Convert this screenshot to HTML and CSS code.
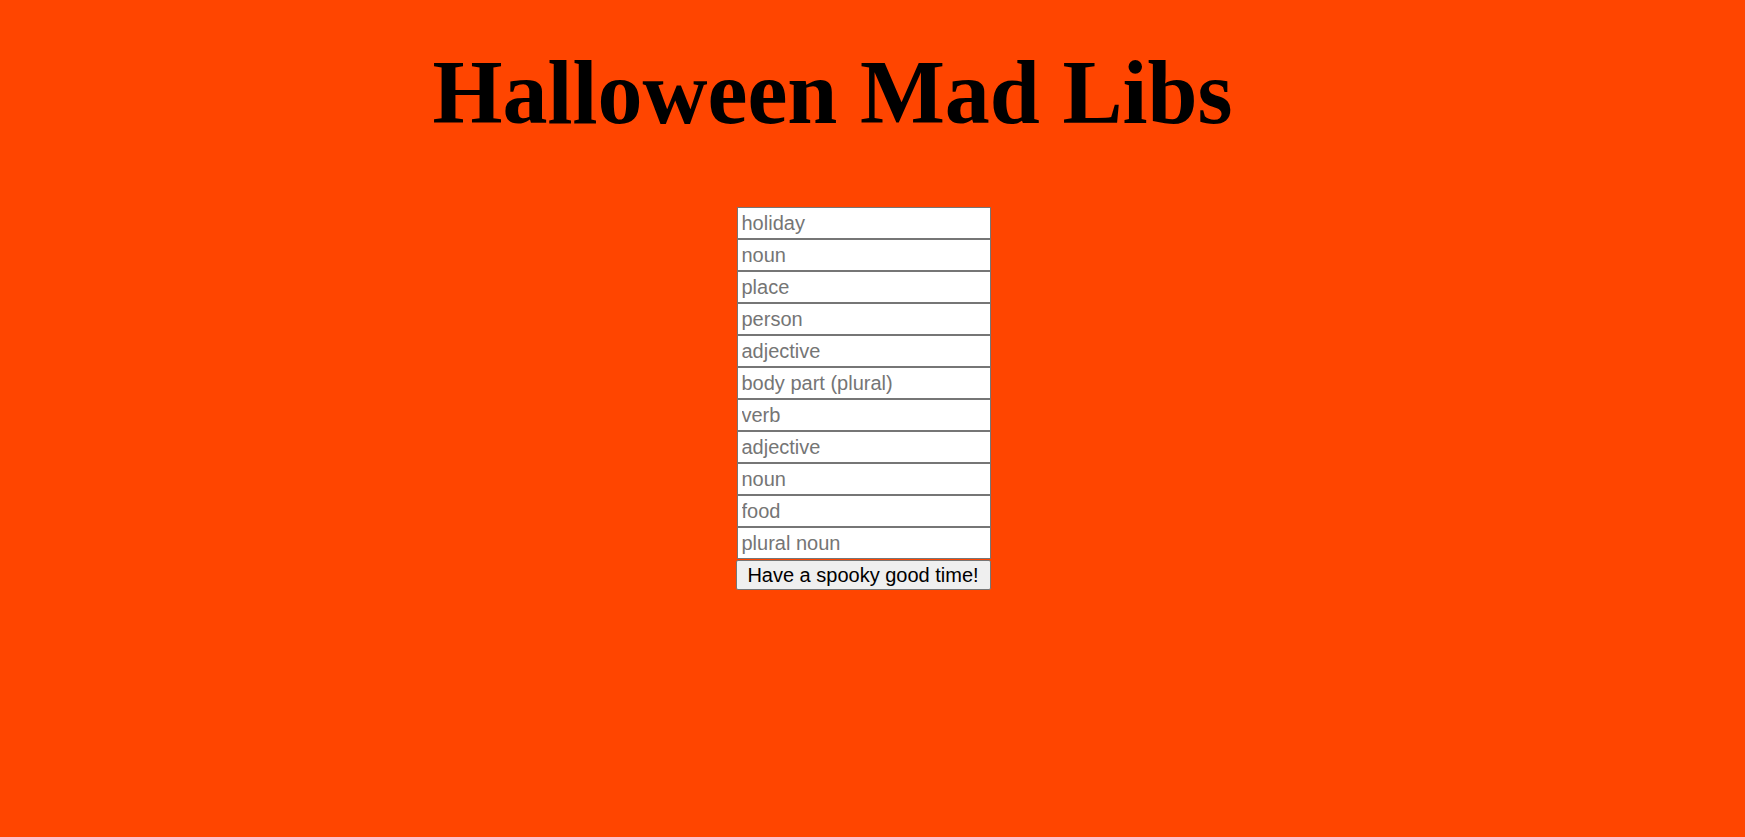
FILE: index.html
```html
<!DOCTYPE html>
<html>
<head>
<meta charset="utf-8">
<title>Halloween Mad Libs</title>
<link rel="stylesheet" href="styles.css">
</head>
<body>
<main class="page">
  <h1 class="title">Halloween Mad Libs</h1>
  <form class="madlib">
    <input class="word" type="text" placeholder="holiday">
    <input class="word" type="text" placeholder="noun">
    <input class="word" type="text" placeholder="place">
    <input class="word" type="text" placeholder="person">
    <input class="word" type="text" placeholder="adjective">
    <input class="word" type="text" placeholder="body part (plural)">
    <input class="word" type="text" placeholder="verb">
    <input class="word" type="text" placeholder="adjective">
    <input class="word" type="text" placeholder="noun">
    <input class="word" type="text" placeholder="food">
    <input class="word" type="text" placeholder="plural noun">
    <button class="go" type="button">Have a spooky good time!</button>
  </form>
</main>
</body>
</html>
```

FILE: styles.css
```css
html, body {
  margin: 0;
  padding: 0;
  background: #ff4500;
  height: 100%;
}

.page {
  display: flex;
  flex-direction: column;
  align-items: center;
  padding-top: 41px;
}

.title {
  margin: 0;
  padding-right: 80px;
  font-family: "Liberation Serif", "Times New Roman", serif;
  font-weight: bold;
  font-size: 90px;
  line-height: normal;
  color: #000;
}

.madlib {
  display: flex;
  flex-direction: column;
  width: 254px;
  margin-top: 63px;
  margin-right: 18px;
}

.word {
  box-sizing: border-box;
  display: block;
  width: 254px;
  height: 32px;
  margin: 0;
  padding: 0 4px;
  border: 1px solid #767676;
  background: #fff;
  font-family: "Liberation Sans", Arial, sans-serif;
  font-size: 20px;
  color: #000;
  outline: none;
}

.word::placeholder {
  color: #757575;
}

.go {
  box-sizing: border-box;
  width: 255px;
  height: 30px;
  margin: 1px 0 0 -1px;
  padding: 0 6px;
  border: 1px solid #767676;
  border-radius: 2px;
  background: #efefef;
  font-family: "Liberation Sans", Arial, sans-serif;
  font-size: 20px;
  color: #000;
}
```
